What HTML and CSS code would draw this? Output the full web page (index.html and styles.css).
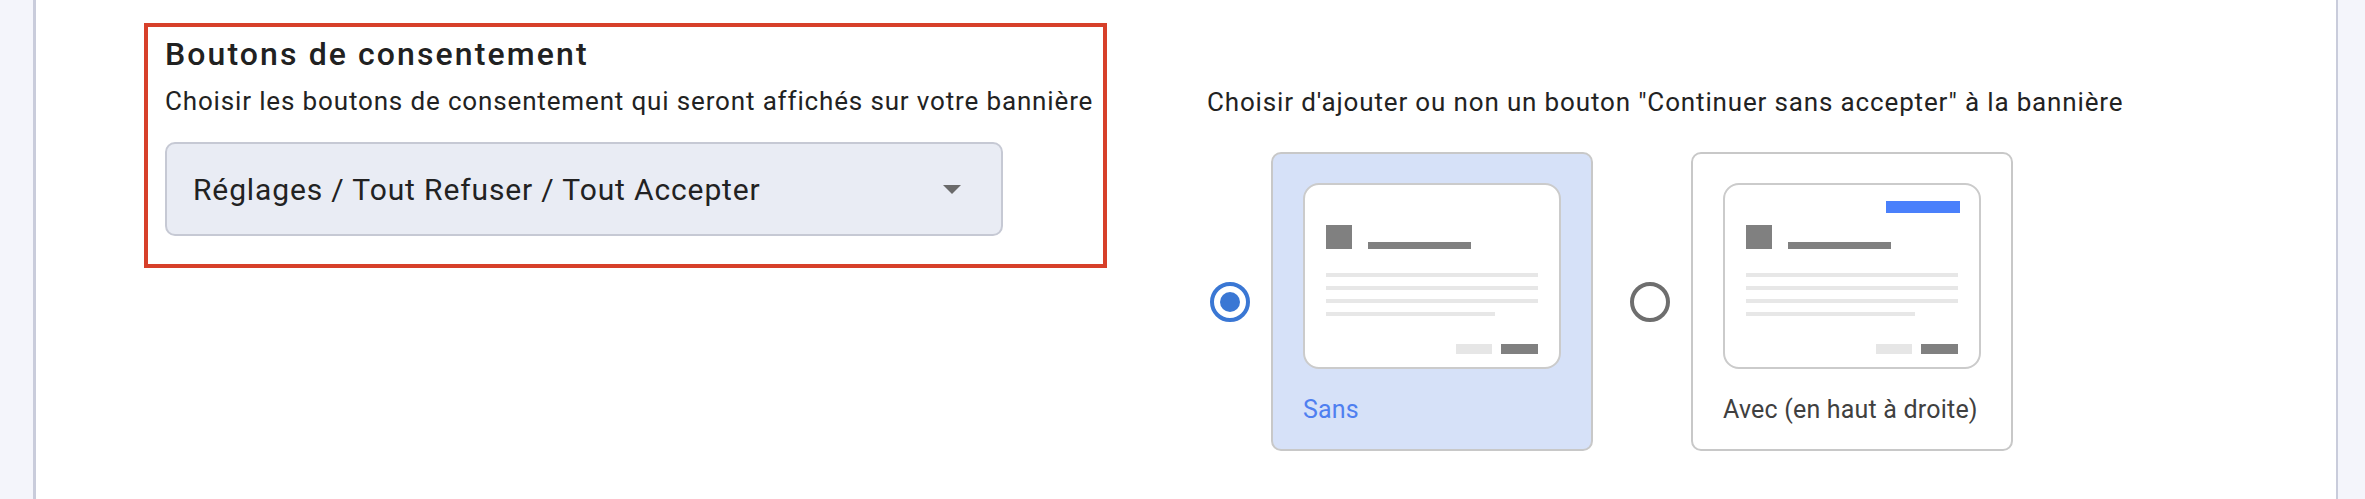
FILE: index.html
```html
<!DOCTYPE html>
<html lang="fr">
<head>
    <meta charset="UTF-8">
    <meta name="viewport" content="width=device-width, initial-scale=1.0">
    <title>Boutons de consentement</title>
    <link rel="stylesheet" href="styles.css">
</head>
<body>
    <div class="panel">
        <div class="settings-row">
            <div class="consent-box">
                <h2 class="section-title">Boutons de consentement</h2>
                <p class="section-desc">Choisir les boutons de consentement qui seront affichés sur votre bannière</p>
                <div class="select">
                    <span class="select-value">Réglages / Tout Refuser / Tout Accepter</span>
                    <svg class="select-arrow" width="18" height="9" viewBox="0 0 18 9">
                        <path d="M0 0 L18 0 L9 9 Z" fill="#6a6a6a"/>
                    </svg>
                </div>
            </div>

            <div class="continue-section">
                <p class="section-desc">Choisir d'ajouter ou non un bouton "Continuer sans accepter" à la bannière</p>
                <div class="options">
                    <div class="option">
                        <span class="radio checked"></span>
                        <div class="option-card selected">
                            <div class="preview">
                                <div class="preview-top"></div>
                                <div class="preview-head">
                                    <span class="preview-logo"></span>
                                    <span class="preview-title"></span>
                                </div>
                                <div class="preview-lines">
                                    <span class="line"></span>
                                    <span class="line"></span>
                                    <span class="line"></span>
                                    <span class="line short"></span>
                                </div>
                                <div class="preview-buttons">
                                    <span class="btn-light"></span>
                                    <span class="btn-dark"></span>
                                </div>
                            </div>
                            <div class="option-label">Sans</div>
                        </div>
                    </div>

                    <div class="option">
                        <span class="radio"></span>
                        <div class="option-card">
                            <div class="preview">
                                <div class="preview-top">
                                    <span class="continue-bar"></span>
                                </div>
                                <div class="preview-head">
                                    <span class="preview-logo"></span>
                                    <span class="preview-title"></span>
                                </div>
                                <div class="preview-lines">
                                    <span class="line"></span>
                                    <span class="line"></span>
                                    <span class="line"></span>
                                    <span class="line short"></span>
                                </div>
                                <div class="preview-buttons">
                                    <span class="btn-light"></span>
                                    <span class="btn-dark"></span>
                                </div>
                            </div>
                            <div class="option-label">Avec (en haut à droite)</div>
                        </div>
                    </div>
                </div>
            </div>
        </div>
    </div>
</body>
</html>
```

FILE: styles.css
```css
:root {
    --page-bg: #f4f5fb;
    --panel-border: #c9ccdb;
    --accent: #3a77d4;
    --highlight: #d6e1f8;
    --block-gray: #808080;
    --line-gray: #e7e7e7;
    --red: #d7402a;
}

* {
    box-sizing: border-box;
}

body {
    margin: 0;
    height: 100vh;
    background: var(--page-bg);
    font-family: Roboto, "Liberation Sans", sans-serif;
    color: #222;
}

.panel {
    height: 100%;
    margin: 0 27px 0 33px;
    background: white;
    border-left: 3px solid var(--panel-border);
    border-right: 2px solid var(--panel-border);
    padding: 23px 0 0 108px;
}

.settings-row {
    display: flex;
    align-items: flex-start;
}

/* left block */
.consent-box {
    width: 963px;
    height: 245px;
    border: 4px solid var(--red);
    padding: 7px 17px 0 17px;
}

.section-title {
    margin: 0;
    font-size: 32px;
    line-height: 40px;
    font-weight: 500;
    letter-spacing: 2.1px;
    color: #212121;
}

.section-desc {
    margin: 10px 0 0;
    font-size: 26px;
    line-height: 34px;
    letter-spacing: 0.85px;
    color: #222;
    white-space: nowrap;
}

.select {
    margin-top: 24px;
    width: 838px;
    height: 94px;
    display: flex;
    align-items: center;
    justify-content: space-between;
    padding: 0 40px 0 26px;
    background: #e9ecf4;
    border: 2px solid #c6c9d4;
    border-radius: 10px;
}

.select-value {
    font-size: 30px;
    letter-spacing: 0.87px;
    color: #222;
}

/* right block */
.continue-section {
    margin-left: 100px;
    margin-top: 52px;
}

.options {
    display: flex;
    margin-top: 33px;
}

.option {
    display: flex;
    align-items: center;
}

.option + .option {
    margin-left: 37px;
}

.option:first-child .radio {
    margin-left: 3px;
}

.radio {
    width: 40px;
    height: 40px;
    border-radius: 50%;
    border: 4px solid #6e6e6e;
    margin-right: 21px;
    display: flex;
    align-items: center;
    justify-content: center;
}

.radio.checked {
    border-color: var(--accent);
}

.radio.checked::after {
    content: "";
    width: 20px;
    height: 20px;
    border-radius: 50%;
    background: var(--accent);
}

.option-card {
    width: 322px;
    height: 299px;
    border: 2px solid #c8c8c8;
    border-radius: 10px;
    background: white;
    padding: 29px 0 0 30px;
}

.option-card.selected {
    background: var(--highlight);
}

.preview {
    width: 258px;
    height: 186px;
    background: white;
    border: 2px solid #cbcbcb;
    border-radius: 16px;
    padding: 16px 19px 13px 21px;
    display: flex;
    flex-direction: column;
}

.preview-top {
    height: 12px;
    display: flex;
    justify-content: flex-end;
}

.continue-bar {
    width: 74px;
    height: 12px;
    background: #4a80fb;
}

.preview-head {
    margin-top: 12px;
    display: flex;
    align-items: flex-end;
}

.preview-logo {
    width: 26px;
    height: 24px;
    background: var(--block-gray);
}

.preview-title {
    width: 103px;
    height: 7px;
    margin-left: 16px;
    background: var(--block-gray);
}

.preview-lines {
    margin-top: 24px;
    display: flex;
    flex-direction: column;
    gap: 9px;
}

.line {
    width: 212px;
    height: 4px;
    background: var(--line-gray);
}

.line.short {
    width: 169px;
}

.preview-buttons {
    margin-top: auto;
    width: 212px;
    display: flex;
    justify-content: flex-end;
    gap: 9px;
}

.btn-light,
.btn-dark {
    width: 36px;
    height: 10px;
}

.btn-light {
    background: #e6e6e6;
}

.btn-dark {
    width: 37px;
    background: var(--block-gray);
}

.option-label {
    margin-top: 26px;
    font-size: 25px;
    line-height: 30px;
    letter-spacing: 0.2px;
    color: #404040;
}

.selected .option-label {
    color: #4f7ff0;
}
```
